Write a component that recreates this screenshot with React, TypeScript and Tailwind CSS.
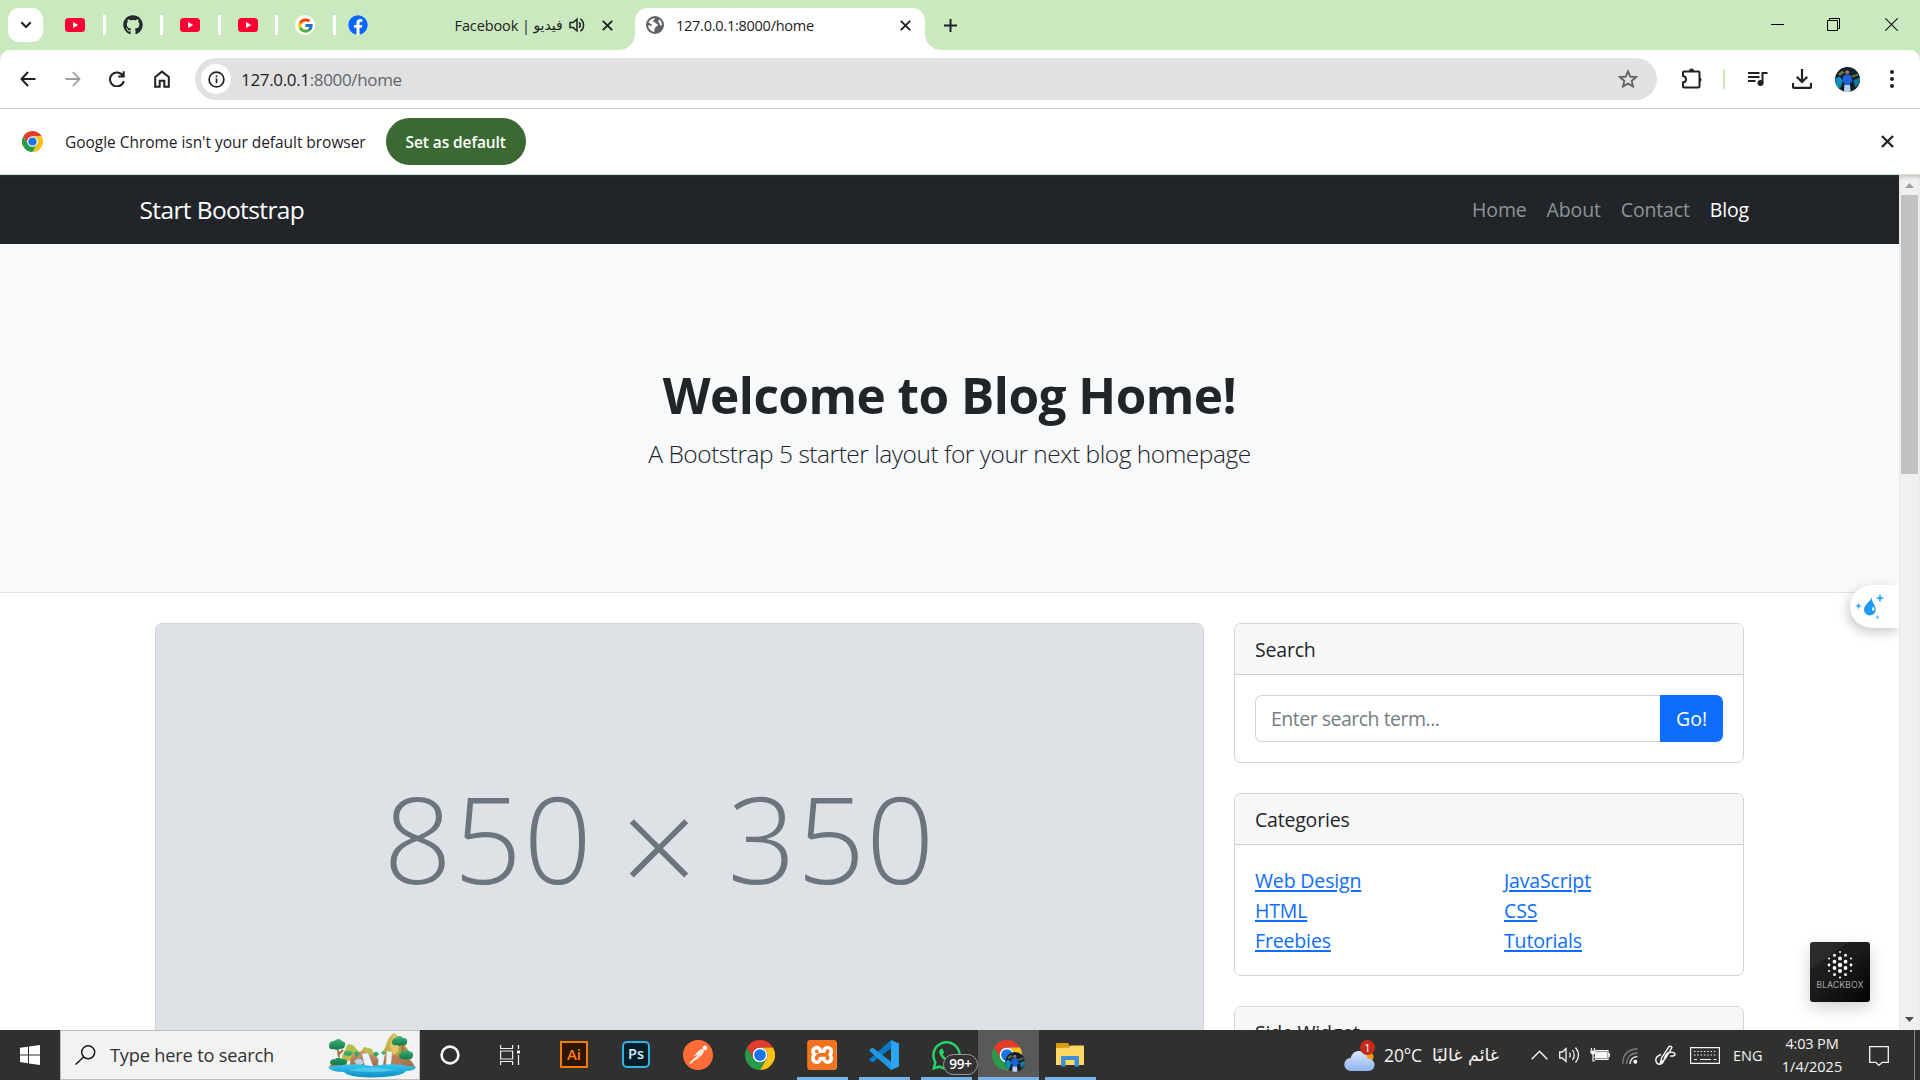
import type { ReactNode } from "react";
import { FaFacebook, FaGithub, FaWhatsapp } from "react-icons/fa";
import { FcGoogle } from "react-icons/fc";
import { SiPostman, SiXampp } from "react-icons/si";

function YouTube({ className = "" }: { className?: string }) {
  return (
    <svg viewBox="0 0 20 14" className={`h-[14px] w-5 shrink-0 ${className}`}>
      <rect width="20" height="14" rx="3.5" fill="#ff0033" />
      <path d="M8 4l5.2 3L8 10z" fill="#fff" />
    </svg>
  );
}

function ChromeLogo({ className = "" }: { className?: string }) {
  return (
    <svg viewBox="0 0 48 48" className={className}>
      <circle cx="24" cy="24" r="12" fill="#fff" />
      <path d="M3.2 12A24 24 0 0 1 44.8 12H24a12 12 0 0 0-10.4 18z" fill="#e33b2e" />
      <path d="M44.8 12A24 24 0 0 1 24 48l10.4-18A12 12 0 0 0 24 12z" fill="#fbc116" />
      <path d="M24 48A24 24 0 0 1 3.2 12l10.4 18a12 12 0 0 0 20.8 0z" fill="#2a9a47" />
      <circle cx="24" cy="24" r="9.4" fill="#1a73e8" />
    </svg>
  );
}

function Avatar({ className = "" }: { className?: string }) {
  return (
    <svg viewBox="0 0 26 26" className={`rounded-full ${className}`}>
      <rect width="26" height="26" fill="#10222b" />
      <path d="M0 12l5-2 3 4-2 7-4 2z" fill="#0d8fb8" />
      <path d="M19 14l7-3v6l-5 4z" fill="#11799b" />
      <path d="M3 7l5-3 2 2-5 3zM17 9l7-2v2l-6 2z" fill="#6a7540" />
      <circle cx="12.7" cy="5.5" r="2" fill="#a87258" />
      <path d="M8.5 9.5l2.5-1.7h3.5l2.5 1.7 1 6-2 .8-.4-2v5H9.8v-5l-.6 2-1.800-.8z" fill="#1f62dc" />
      <path d="M9.8 18.8h5.8l.6 7.200h-7z" fill="#b9cfea" />
    </svg>
  );
}

function CloseIcon({ className = "size-[11px]" }: { className?: string }) {
  return (
    <svg viewBox="0 0 11 11" className={className} stroke="#1f2125" strokeWidth="1.9">
      <path d="M.8.8l9.4 9.4M10.2.8L.8 10.2" />
    </svg>
  );
}

function PinnedTab({ children }: { children: ReactNode }) {
  return (
    <div className="flex h-5 w-[57.5px] shrink-0 items-center justify-center border-r-[3px] border-white">
      {children}
    </div>
  );
}

function TabStrip() {
  return (
    <div className="flex h-[50px] w-full bg-[#cae9be]">
      <div className="ml-2 mt-2 flex h-[34px] w-[35px] shrink-0 items-center justify-center rounded-[11px] bg-white">
        <svg viewBox="0 0 12 8" className="h-2 w-3" fill="none" stroke="#1f2125" strokeWidth="2.1">
          <path d="M1.3 1.3L6 6l4.7-4.7" />
        </svg>
      </div>
      <div className="ml-[5px] flex h-[50px] items-center">
        <PinnedTab><YouTube /></PinnedTab>
        <PinnedTab><FaGithub className="size-5 text-[#24292f]" /></PinnedTab>
        <PinnedTab><YouTube /></PinnedTab>
        <PinnedTab><YouTube /></PinnedTab>
        <PinnedTab>
          <span className="flex size-5 items-center justify-center rounded-full bg-white">
            <FcGoogle className="size-[17px]" />
          </span>
        </PinnedTab>
      </div>
      <div className="flex h-[50px] w-[299.5px] shrink-0 items-center pl-3">
        <span className="flex size-5 items-center justify-center rounded-full bg-white">
          <FaFacebook className="size-5 shrink-0 text-[#0866ff]" />
        </span>
        <span className="ml-[87px] mt-px whitespace-nowrap text-[14.5px] tracking-[-0.1px] text-[#1f2125]">Facebook |</span>
        <span dir="rtl" className="mt-px w-[33px] whitespace-nowrap font-['DejaVu_Sans',sans-serif] text-[14px] tracking-normal text-[#1f2125]">فيديو</span>
        <svg viewBox="0 0 16 16" className="ml-[6px] size-4 shrink-0" fill="none" stroke="#1f2125" strokeWidth="1.5">
          <path d="M1 5.500h3L8 2.200v11.600L4 10.500H1zM10.300 5.200q2 2.800 0 5.600M11.300 1.800c4.300 2.400 4.300 10 0 12.400" />
        </svg>
        <CloseIcon className="ml-[17px] size-[11px] shrink-0" />
      </div>
      <div className="relative mt-2 flex h-[42px] w-[290px] shrink-0 items-center rounded-t-[13px] bg-white pb-2">
        <span className="absolute -left-4 bottom-0 size-4 overflow-hidden bg-white">
          <span className="block size-full rounded-br-2xl bg-[#cae9be]" />
        </span>
        <span className="absolute -right-4 bottom-0 size-4 overflow-hidden bg-white">
          <span className="block size-full rounded-bl-2xl bg-[#cae9be]" />
        </span>
        <svg viewBox="0 0 18 18" className="ml-[11px] size-[18px]">
          <circle cx="9" cy="9" r="9" fill="#5f6368" />
          <path d="M9.500 2.200c-1.700.6-1 1.900-2 2.300-1.200.5-.2 1.700.8 1.800 1.900.1 1.300 1.700 2.800 1.700.9 0 1 .8.500 1.500-.8 1.200-2 .7-2.200 2-.1 1.200-1.300 1.200-1.200 2.700.1 1 1 1 .9 1.600A7 7 0 0 1 2 9.300c.9.100 2 .5 3.200.3 1-.2 1.400-.8.500-1.200C4.200 7.800 3.700 7 2.400 6.800A7 7 0 0 1 9.500 2.200zM13 3.300c1.700 1.200 2.900 3 2.900 5.600-.8 1.300-2.200.1-2.300-1.200 0-1-1.400-1.300-1.300-2.400.1-.8 1-1 .7-2z" fill="#fff" />
        </svg>
        <span className="ml-3 mt-px w-[224px] whitespace-nowrap text-[14.500px] tracking-[-0.25px] text-[#1f2125]">127.0.0.1:8000/home</span>
        <CloseIcon className="size-[11px] shrink-0" />
      </div>
      <div className="flex h-[50px] items-center pl-[19px]">
        <svg viewBox="0 0 13 13" className="size-[13px]" stroke="#1f2125" strokeWidth="2">
          <path d="M6.500 0v13M0 6.500h13" />
        </svg>
      </div>
      <div className="ml-auto flex h-[49px] items-center gap-[43px] pr-[22px]">
        <svg viewBox="0 0 13 13" className="size-[13px]" stroke="#000"><path d="M0 6.500h13" /></svg>
        <svg viewBox="0 0 13 13" className="size-[13px]" stroke="#000" fill="none">
          <path d="M.5 2.500h10v10H.5zM2.500 2.500V.5h10v10h-2" />
        </svg>
        <svg viewBox="0 0 13 13" className="ml-[2px] size-[13px]" stroke="#111" strokeWidth="1.100"><path d="M.3.3l12.400 12.400M12.700.3L.3 12.700" /></svg>
      </div>
    </div>
  );
}

function Toolbar() {
  return (
    <div className="h-[59px] w-full bg-[#cae9be]">
      <div className="flex h-[59px] items-center rounded-t-[10px] border-b border-[#cbcbcb] bg-white">
        <div className="flex w-[195px] items-center pl-[20px]">
          <svg viewBox="0 0 16 16" className="size-4" fill="none" stroke="#1f2125" strokeWidth="2">
            <path d="M8 1L1.500 8 8 15M1.500 8H15.500" />
          </svg>
          <svg viewBox="0 0 16 16" className="ml-[29px] size-4" fill="none" stroke="#9d9d9d" strokeWidth="1.800">
            <path d="M8 1l6.500 7L8 15M14.500 8H.5" />
          </svg>
          <svg viewBox="0 0 16 16" className="ml-[28px] size-4" fill="none" stroke="#1f2125" strokeWidth="2">
            <path d="M14 4.800A7 7 0 1 0 14.800 10M14.700.3v5.200H9.300" />
          </svg>
          <svg viewBox="0 0 16 18" className="ml-[29px] h-[18px] w-4" fill="none" stroke="#1f2125" strokeWidth="2">
            <path d="M1.200 7L8 1.600 14.800 7v9.800h-4.500v-6H5.700v6H1.200z" />
          </svg>
        </div>
        <div className="flex h-[42px] w-[1462px] items-center rounded-full bg-[#e1e1e1]">
          <div className="ml-[6px] flex size-[30px] items-center justify-center rounded-full bg-white">
            <svg viewBox="0 0 17 17" className="size-[17px]" fill="none" stroke="#1f2125" strokeWidth="1.700">
              <circle cx="8.500" cy="8.500" r="7.400" />
              <path d="M8.500 7.500v4.800M8.500 4.400v1.800" />
            </svg>
          </div>
          <span className="ml-[10px] mt-px whitespace-nowrap text-[17px] tracking-[-0.34px] text-[#1f2125]">
            127.0.0.1<span className="text-[#636568]">:8000/home</span>
          </span>
          <svg viewBox="0 0 20 20" className="ml-auto mr-[19px] size-5" fill="none" stroke="#5f6265" strokeWidth="1.800">
            <path d="M10 2.300l2.300 5.300 5.800.5-4.400 3.800 1.300 5.700-5-3-5 3 1.300-5.700L1.900 8.100l5.800-.5z" />
          </svg>
        </div>
        <svg viewBox="0 0 22 22" className="ml-[24px] size-[22px]" fill="none" stroke="#1f2125" strokeWidth="2">
          <path d="M3 3.500h14.500a1 1 0 0 1 1 1v14a1 1 0 0 1-1 1H3a1 1 0 0 1-1-1v-4c4-.5 4-6 0-6.500v-3.500a1 1 0 0 1 1-1z" />
          <path d="M8 3a2.500 2.500 0 0 1 5 0zM19 9.500a2.500 2.500 0 0 1 0 4.600z" fill="#1f2125" stroke="none" />
        </svg>
        <div className="ml-[20px] h-5 w-[2px] bg-[#cae9be]" />
        <svg viewBox="0 0 20 16" className="ml-[23px] h-4 w-5" fill="none" stroke="#1f2125" strokeWidth="2">
          <path d="M0 2h11.500M0 6h11.500M0 10h7.500M14.500 12V2h5" />
          <circle cx="12.500" cy="12" r="3" fill="#1f2125" stroke="none" />
        </svg>
        <svg viewBox="0 0 20 20" className="ml-[24px] size-5" fill="none" stroke="#1f2125" strokeWidth="2.200">
          <path d="M10 0v12.500M4.800 7.800L10 13l5.200-5.200M1 14v3.500a1.300 1.300 0 0 0 1.300 1.300h15.400a1.300 1.300 0 0 0 1.300-1.300V14" />
        </svg>
        <Avatar className="ml-[23px] size-[25px]" />
        <svg viewBox="0 0 4 18" className="ml-[30px] h-[18px] w-1" fill="#1f2125">
          <circle cx="2" cy="2" r="2" /><circle cx="2" cy="9" r="2" /><circle cx="2" cy="16" r="2" />
        </svg>
      </div>
    </div>
  );
}

function InfoBar() {
  return (
    <div className="flex h-[66px] items-center border-b border-[#d5e6cf] bg-white">
      <ChromeLogo className="ml-[22px] size-[21px]" />
      <span className="ml-[22px] mt-[2px] whitespace-nowrap text-[15.500px] tracking-[-0.04px] text-[#1f2125]">
        Google Chrome isn't your default browser
      </span>
      <button className="ml-[20px] flex h-[47px] w-[140px] items-center justify-center rounded-full bg-[#3a6931] pt-[2px] text-[15.500px] font-semibold tracking-[-0.1px] text-white">
        Set as default
      </button>
      <CloseIcon className="ml-auto mr-[26px] size-[13px]" />
    </div>
  );
}

function Card({ title, className = "", children }: { title: string; className?: string; children?: ReactNode }) {
  return (
    <div className={`overflow-hidden rounded-[7px] border border-[#d2d3d4] bg-white ${className}`}>
      <div className="h-[51px] border-b border-[#cfcfcf] bg-[#f7f7f7] px-5 pt-[10px] text-[19.500px] leading-[31px] tracking-[-0.2px]">
        {title}
      </div>
      {children}
    </div>
  );
}

function LinkList({ items }: { items: string[] }) {
  return (
    <ul className="w-[249px] shrink-0 text-[19.500px] leading-[30px] tracking-[-0.150px] text-[#0d6efd]">
      {items.map((t) => (
        <li key={t}><a className="underline decoration-[1.500px] underline-offset-[2px]">{t}</a></li>
      ))}
    </ul>
  );
}

function BlogPage() {
  return (
    <div className="h-full w-[1899px] overflow-hidden bg-white text-[#212529]">
      <nav className="flex h-[69px] items-center bg-[#212529] pl-[139.500px] pr-[150px] pt-px shadow-[inset_0_4px_4px_-3px_#2b3330]">
        <span className="text-[24.500px] tracking-[-0.620px] text-white">Start Bootstrap</span>
        <div className="ml-auto flex gap-5 text-[19.500px] tracking-[-0.150px] text-[#909294]">
          <span>Home</span>
          <span>About</span>
          <span>Contact</span>
          <span className="text-white">Blog</span>
        </div>
      </nav>
      <header className="flex h-[349px] flex-col items-center border-b border-[#dee2e6] bg-[#f8f9fb] pt-[121px]">
        <h1 className="text-[49.500px] font-bold leading-[60px] tracking-[-0.520px]">Welcome to Blog Home!</h1>
        <p className="mt-[10px] text-[24.500px] font-light leading-[38px] tracking-[-0.480px]">
          A Bootstrap 5 starter layout for your next blog homepage
        </p>
      </header>
      <main className="flex gap-[30px] pl-[154.500px] pt-[30px]">
        <div className="h-[700px] w-[1049.500px] shrink-0 overflow-hidden rounded-[7px] border border-[#cfd2d6] bg-white">
          <div className="flex h-[428px] items-center bg-[#dee2e6] text-[120px] font-light leading-none text-[#6c757d]">
            <span className="ml-[228px] w-[237px] tracking-[1.500px]">850</span>
            <span className="mt-3 w-[107px] text-[135px]">×</span>
            <span className="tracking-[0.700px]">350</span>
          </div>
          <div className="h-[272px] bg-[#dee2e6]" />
        </div>
        <aside className="w-[510px] shrink-0">
          <Card title="Search" className="h-[140px]">
            <div className="flex p-5">
              <div className="flex h-[47px] flex-1 items-center rounded-l-[7px] border border-r-0 border-[#d0d5da] pl-[15px] pt-px text-[19.500px] tracking-[-0.500px] text-[#757c83]">
                Enter search term...
              </div>
              <button className="h-[47px] w-[63px] rounded-r-[7px] bg-[#0d6efd] pt-px text-[19.500px] text-white">Go!</button>
            </div>
          </Card>
          <Card title="Categories" className="mt-[30px] h-[183px]">
            <div className="flex px-5 pt-[21px]">
              <LinkList items={["Web Design", "HTML", "Freebies"]} />
              <LinkList items={["JavaScript", "CSS", "Tutorials"]} />
            </div>
          </Card>
          <Card title="Side Widget" className="mt-[30px] h-[180px]" />
        </aside>
      </main>
    </div>
  );
}

function Scrollbar() {
  return (
    <div className="flex w-[21px] flex-col items-center bg-[#f0f0f0] shadow-[inset_0_4px_4px_-2px_#c4c4c4]">
      <svg viewBox="0 0 9 5" className="mt-2 h-[5px] w-[9px]" fill="#a0a0a0"><path d="M0 5l4.500-5L9 5z" /></svg>
      <div className="mt-[7px] h-[279px] w-[17px] bg-[#c1c1c1]" />
      <svg viewBox="0 0 9 5" className="mb-2 mt-auto h-[5px] w-[9px]" fill="#505050"><path d="M0 0l4.500 5L9 0z" /></svg>
    </div>
  );
}

function AssistantHandle() {
  return (
    <div className="absolute right-[21px] top-[410px] flex h-[43px] w-[49px] items-center rounded-l-full bg-white shadow-[-2px_4px_12px_rgba(0,0,0,0.22)] [clip-path:inset(-20px_0_-30px_-20px)]">
      <svg viewBox="0 0 30 28" className="mb-[2px] ml-[5px] h-7 w-[30px]" fill="#1d9bf0">
        <path d="M16.500 5c-.5 4.500-7.500 7.500-7.500 12.700a5.800 5.800 0 0 0 11.700 0c0-4.500-4-7-4.200-12.700z" />
        <path d="M18.500 14.500q1.500 1.500.8 4h-2.300v-2.500z" fill="#e8f6ff" />
        <path d="M25 1.500l1.200 3.300 3.300 1.200-3.300 1.200L25 10.500l-1.200-3.300L20.500 6l3.300-1.200zM3.500 10.500l.9 2.600 2.600.9-2.600.9-.9 2.600-.9-2.600L0 14l2.600-.9zM22.500 23l.6 1.600 1.600.6-1.600.6-.6 1.600-.6-1.600-1.600-.6 1.600-.6z" fill="#3aaef5" />
      </svg>
    </div>
  );
}

const DOTS: [number, number, number][] = [
  [30, 10, 1], [24.5, 13.3, 1.5], [35.5, 13.3, 1.5], [19, 16.5, 1], [30, 16.5, 1.9], [41, 16.5, 1],
  [24.5, 19.7, 1.9], [35.5, 19.7, 1.9], [19, 23, 1.4], [30, 23, 2.2], [41, 23, 1.4], [24.5, 26, 1.9],
  [35.5, 26, 1.9], [19, 29, 1], [30, 29, 2], [41, 29, 1], [24.5, 32.5, 1.5], [35.5, 32.5, 1.5], [30, 35.5, 1.1],
];

function BlackboxBadge() {
  return (
    <div className="absolute right-[50px] top-[767px] flex size-[60px] flex-col rounded-[3px] bg-linear-to-br from-[#222] via-[#1a1a1a] to-[#050505] shadow-[0_6px_16px_rgba(0,0,0,0.18)]">
      <svg viewBox="0 0 60 38" className="h-[38px] w-[60px]" fill="#fff">
        <path d="M0 0h38L22 12 0 28z" fill="#fff" opacity=".05" />
        {DOTS.map(([x, y, r]) => <circle key={`${x},${y}`} cx={x} cy={y} r={r} />)}
      </svg>
      <span className="text-center font-['Inter',sans-serif] text-[8.500px] font-light leading-[11px] tracking-[0.300px] text-[#d5d5d5]">BLACKBOX</span>
    </div>
  );
}

function Waterfall() {
  return (
    <svg viewBox="0 0 88 46" className="h-[46px] w-[88px]">
      <defs>
        <linearGradient id="hill" x1="0" y1="0" x2="1" y2="1"><stop offset="0" stopColor="#d8c95c" /><stop offset="1" stopColor="#a58d3c" /></linearGradient>
        <linearGradient id="lake" x1="0" y1="0" x2="0" y2="1"><stop offset="0" stopColor="#39c6ee" /><stop offset="1" stopColor="#0b8fc4" /></linearGradient>
        <linearGradient id="rock" x1="0" y1="0" x2="0" y2="1"><stop offset="0" stopColor="#cf9a78" /><stop offset="1" stopColor="#96613f" /></linearGradient>
        <linearGradient id="leaf" x1="0" y1="0" x2="0" y2="1"><stop offset="0" stopColor="#3cb573" /><stop offset="1" stopColor="#14794c" /></linearGradient>
      </defs>
      <path d="M50 26q6-6 9-16 2-6 7-9 5 3 8 8l8 12v10H50z" fill="url(#hill)" />
      <path d="M66 1l5 9-1 10-6 4-2-12z" fill="#e2c469" />
      <path d="M14 24l6-12 5 1 7 8 4-6 8 2 4 12H14z" fill="#b9bd4b" />
      <path d="M22 35q0-15 8-15 8-3 12 3 8-5 12 2 8-6 14-1 12-4 19 11v2H22z" fill="url(#rock)" />
      <path d="M64 24q6-2 9 5l2 7H64zM2 33q10-6 16-2l3 5H2z" fill="#b77c58" />
      <path d="M47 11l5-1v8l-1 10-4-5zM34 22l6-1 5 13H37zM51 21l6-1-2 13h-5zM59 19l5 1-1 13h-5z" fill="#e9f5fb" />
      <path d="M26 29q6-5 9 0 3 4-6 4z" fill="#b9d3dc" />
      <path d="M0 35q24-5 44-1 22-4 44 1-1 4-10 4-4 6-36 6.500Q20 45 16 40 2 40 0 35z" fill="url(#lake)" />
      <path d="M20 38q22-5 48 0-24 4-48 0z" fill="#6adcf7" opacity=".6" />
      <path d="M10 18l1 7M11 22l4-4M75 12l-1 8 2-4M80 26l-1 8 3-5" stroke="#a3734a" strokeWidth="2" fill="none" />
      <g fill="url(#leaf)">
        <path d="M1 14q0-5 5-5 5-4 8 0 4 1 3 4 0 4-5 4-4 2-6 0-5 1-5-3z" />
        <path d="M64 10q0-4 4-4 4-4 7 0 5 0 4 4 0 4-5 3-3 2-5 0-5 1-5-3z" />
        <path d="M71 24q0-4 4-4 3-4 6-1 5 1 4 5-1 4-5 3-3 1-5 0-4 0-4-3z" />
        <path d="M2 31q0-4 5-4 4-3 7 0 6 0 5 4-4 3-8 2-8 1-9-2zM16 20q6-3 9 1l-3 3-6-1zM26 20q4-2 6 2l-4 3zM45 21q4-3 6 1l-3 3zM53 20q3-2 5 1l-3 2z" />
      </g>
    </svg>
  );
}

function TaskItem({ children, state = "idle", className = "w-[62px]" }: { children: ReactNode; state?: "idle" | "open" | "active"; className?: string }) {
  return (
    <div className={`relative flex h-[50px] shrink-0 flex-col items-center ${state === "active" ? "bg-[#5a5958]" : ""} ${className}`}>
      <div className="flex h-[50px] items-center">{children}</div>
      {state !== "idle" && (
        <div className={`absolute bottom-0 h-[3px] bg-[#76b3ea] ${state === "active" ? "w-full" : "w-[51px]"}`} />
      )}
    </div>
  );
}

function Taskbar() {
  return (
    <div className="flex h-[50px] w-full items-center bg-[#30302f] text-[#f4f4f4]">
      <div className="flex w-[60px] justify-center">
        <svg viewBox="0 0 20 20" className="size-5" fill="#fff">
          <path d="M0 2.800L8 1.700V9.400H0zM9 1.600L20 0v9.400H9zM0 10.400h8v7.800L0 17.100zM9 10.400h11V20L9 18.400z" />
        </svg>
      </div>
      <div className="flex h-[50px] w-[360px] items-center border border-[#bcbcbc] bg-[#f2f2f2]">
        <svg viewBox="0 0 21 20" className="ml-[14px] h-5 w-[21px]" fill="none" stroke="#1b1b1b" strokeWidth="1.500">
          <circle cx="13.200" cy="7.300" r="6.500" /><path d="M8.500 12L.6 19.500" />
        </svg>
        <span className="ml-[14px] mt-[2px] whitespace-nowrap text-[18.200px] tracking-[-0.180px] text-[#333]">Type here to search</span>
        <div className="ml-auto mr-[3px]"><Waterfall /></div>
      </div>
      <TaskItem className="w-[60px]">
        <svg viewBox="0 0 20 20" className="size-5" fill="none" stroke="#f5f5f5" strokeWidth="2.600"><circle cx="10" cy="10" r="8.400" /></svg>
      </TaskItem>
      <TaskItem className="w-[63px]">
        <svg viewBox="0 0 21 20" className="ml-[-2px] h-5 w-[21px]" fill="none" stroke="#f0f0f0" strokeWidth="1.200">
          <path d="M.6 0v3.500h12V0M.6 20v-3.500h12V20M.6 6h12v8H.6zM18.500 0v4M18.500 10v10" />
          <path d="M17 5.500h3v3h-3z" fill="#f0f0f0" stroke="none" />
        </svg>
      </TaskItem>
      <TaskItem>
        <div className="mb-[2px] flex h-[27px] w-[28px] items-center justify-center border-2 border-[#f57c00] bg-[#2d1500] text-[15px] font-semibold leading-none text-[#ff7f18]">Ai</div>
      </TaskItem>
      <TaskItem>
        <div className="mb-[2px] flex h-[27px] w-[28px] items-center justify-center rounded-[5px] border-2 border-[#2fb4e8] bg-[#061e2a] text-[14.500px] font-semibold leading-none text-[#d5f1fc]">Ps</div>
      </TaskItem>
      <TaskItem>
        <span className="flex size-[28px] items-center justify-center rounded-full bg-white">
          <SiPostman className="size-[30px] shrink-0 text-[#ff6c37]" />
        </span>
      </TaskItem>
      <TaskItem><ChromeLogo className="size-[30px]" /></TaskItem>
      <TaskItem state="open">
        <span className="flex size-[29px] items-center justify-center rounded-[4px] bg-white">
          <SiXampp className="size-[30px] shrink-0 text-[#f0731f]" />
        </span>
      </TaskItem>
      <TaskItem state="open">
        <svg viewBox="0 0 30 30" className="size-[30px]">
          <path d="M22 0L0 19.500l2.500 2.500 1.500.2L22.500 8z" fill="#0a79c4" />
          <path d="M22 30L0 10.500 2.500 8 4 7.800 22.500 22z" fill="#2196dd" />
          <path d="M22 0l8 3.500v23L22 30z" fill="#2ba5f3" />
        </svg>
      </TaskItem>
      <TaskItem state="open">
        <FaWhatsapp className="size-[33px] text-[#25d366]" />
        <span className="absolute bottom-[5px] right-[-1px] flex h-[21px] w-[35px] items-center justify-center rounded-full border border-[#9a9a9a] bg-[#333] text-[13.500px] font-semibold leading-none tracking-[-0.300px] text-white">99+</span>
      </TaskItem>
      <TaskItem state="active" className="ml-px w-[61px]">
        <ChromeLogo className="ml-[-3px] size-[30px]" />
        <Avatar className="absolute right-[14px] top-[22px] size-5" />
      </TaskItem>
      <TaskItem state="open">
        <svg viewBox="0 0 28 24" className="h-6 w-7">
          <path d="M0 1a1 1 0 0 1 1-1h11l2 3v5H0z" fill="#d99a0c" />
          <path d="M0 5l13-.2L15 2.500h12a1 1 0 0 1 1 1V22H0z" fill="#ffd766" />
          <path d="M5 23.500V14a1 1 0 0 1 1-1h16a1 1 0 0 1 1 1v9.500h-4.500V17h-9v6.500z" fill="#3f8fd6" />
        </svg>
      </TaskItem>

      <div className="ml-auto flex h-[50px] items-center">
        <div className="relative mt-[2px] h-[30px] w-[31px]">
          <svg viewBox="0 0 31 24" className="mt-[7px] h-6 w-[31px]">
            <defs><linearGradient id="cloud" x1="0" y1="0" x2="0" y2="1"><stop offset="0" stopColor="#dbe8fb" /><stop offset="1" stopColor="#8db4f0" /></linearGradient></defs>
            <circle cx="23" cy="9" r="6.500" fill="#f59a1d" />
            <path d="M7 23a6.500 6.500 0 0 1-.5-13Q9 2 16 3q6 1 7.500 7.500 7 .5 7 6.500-.5 6-7 6z" fill="url(#cloud)" />
          </svg>
          <span className="absolute right-0 top-[-1px] flex size-[15px] items-center justify-center rounded-full bg-[#c42b1c] text-[11px] leading-none text-white">1</span>
        </div>
        <span className="ml-[9px] mt-px w-[47px] text-[17.500px] tracking-[-0.130px]">20°C</span>
        <span dir="rtl" className="mt-px w-[68px] whitespace-nowrap font-['DejaVu_Sans',sans-serif] text-[17.500px]">غائم غالبًا</span>
        <svg viewBox="0 0 17 10" className="ml-[32px] h-[10px] w-[17px]" fill="none" stroke="#f4f4f4" strokeWidth="1.500"><path d="M.7 9.200L8.500 1.200l7.800 8" /></svg>
        <svg viewBox="0 0 21 18" className="ml-[11px] h-[18px] w-[21px]" fill="none" stroke="#f4f4f4" strokeWidth="1.300">
          <path d="M.7 6v6h2.600L7 15.500v-13L3.300 6zM10.500 6.500q1.500 2.500 0 5M13.500 4q3.500 5 0 10M16.500 1.500q6 7.500 0 15" />
        </svg>
        <svg viewBox="0 0 20 14" className="ml-[10px] h-[14px] w-5" fill="none" stroke="#f4f4f4" strokeWidth="1.200">
          <path d="M5 2.500h13v9H5M19.300 5v4M3 6.500V13h2M1.500 0v2.500M4.500 0v2.500" />
          <path d="M.3 2.500h5.400v2.200L3.800 6.700H2.200L.3 4.700z" fill="#f4f4f4" stroke="none" />
          <path d="M6 4h10.500v6H5z" fill="#f4f4f4" />
        </svg>
        <svg viewBox="0 0 16 16" className="ml-[12px] mt-[2px] size-4" fill="none" strokeWidth="1.400">
          <path d="M.7 16Q1 1.500 15.500.7M4.500 16q.5-10.500 11-11.300" stroke="#7c7c7c" />
          <path d="M8 16q.5-7 7.500-7.500" stroke="#dedede" />
          <circle cx="13.300" cy="13.800" r="2" fill="#fff" />
        </svg>
        <svg viewBox="0 0 21 20" className="ml-[17px] h-5 w-[21px]" fill="none" stroke="#f4f4f4" strokeWidth="1.400">
          <path d="M5.500 17.500L6.500 13 14 1.500q2-1 3 1L10 14zM6 9.500q-5.500 2-5.200 6 .8 4 4.200 3.700 3.500-.5 4.500-6 1.500-5.500 5.500-6 5-.3 5 2.300-.5 2-5 1.500" />
        </svg>
        <svg viewBox="0 0 30 17" className="ml-[14px] mt-px h-[17px] w-[30px]" fill="none" stroke="#f4f4f4" strokeWidth="1.200">
          <path d="M.6.6h28.800v15.800H.6z" />
          <path d="M4 4.500h23M4 8h23" strokeDasharray="1.500 1.800" />
          <path d="M4 12.500h3M10 12.500h11M23.500 12.500h3" />
        </svg>
        <span className="ml-[13px] mt-[2px] w-[44px] text-[14.500px]">ENG</span>
        <div className="w-[70px] text-center text-[14.500px] leading-[23px]">
          <div className="tracking-[-0.170px]">4:03 PM</div>
          <div>1/4/2025</div>
        </div>
        <svg viewBox="0 0 20 20" className="ml-[22px] mt-px size-5" fill="none" stroke="#f4f4f4" strokeWidth="1.300">
          <path d="M.7.7h18.600v15.600h-6L10 19.300 6.700 16.300H.7z" />
        </svg>
        <div className="ml-[25px] mr-[5px] h-[50px] w-px bg-[#8a8a8a]" />
      </div>
    </div>
  );
}

export default function App() {
  return (
    <div className="flex h-[1080px] w-[1920px] flex-col overflow-hidden bg-white font-['Open_Sans','DejaVu_Sans',sans-serif]">
      <TabStrip />
      <Toolbar />
      <InfoBar />
      <div className="relative flex h-[855px] shrink-0 overflow-hidden">
        <BlogPage />
        <Scrollbar />
        <AssistantHandle />
        <BlackboxBadge />
      </div>
      <Taskbar />
    </div>
  );
}
